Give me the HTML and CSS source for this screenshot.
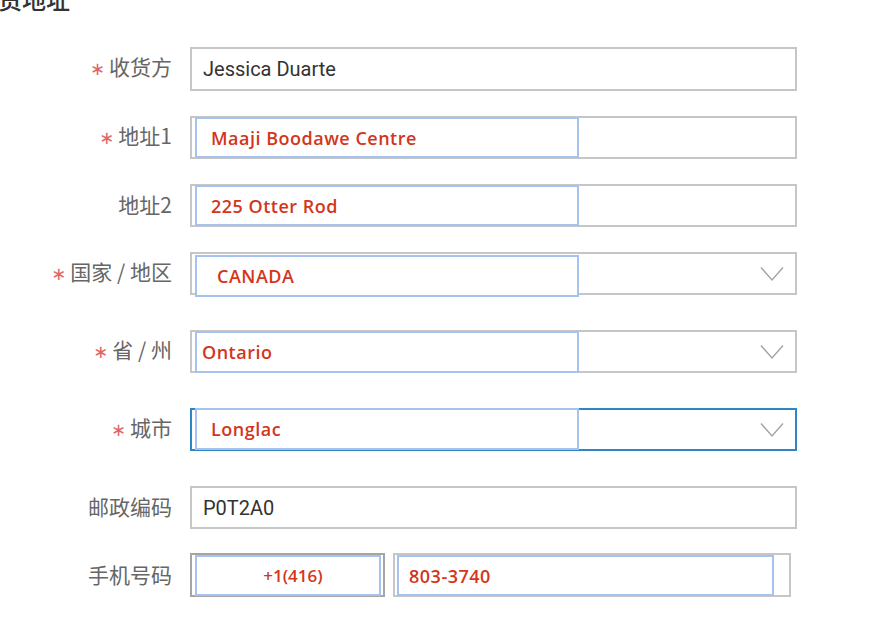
FILE: index.html
```html
<!DOCTYPE html>
<html lang="zh">
<head>
<meta charset="utf-8">
<title>收货地址</title>
<link rel="stylesheet" href="styles.css">
</head>
<body>
<h2 class="title">收货地址</h2>
<form class="form">
  <div class="row first">
    <label class="lbl"><span class="req">∗</span>收货方</label>
    <div class="field"><span class="val">Jessica Duarte</span></div>
  </div>
  <div class="row">
    <label class="lbl"><span class="req">∗</span>地址1</label>
    <div class="field auto"><div class="hl hl-a"><span class="red">Maaji Boodawe Centre</span></div></div>
  </div>
  <div class="row">
    <label class="lbl">地址2</label>
    <div class="field auto"><div class="hl hl-a"><span class="red">225 Otter Rod</span></div></div>
  </div>
  <div class="row">
    <label class="lbl"><span class="req">∗</span>国家 / 地区</label>
    <div class="field auto select"><div class="hl hl-country"><span class="red">CANADA</span></div>
      <svg class="chev" width="24" height="16" viewBox="0 0 24 16"><path d="M1 1.5 L12 14 L23 1.5" fill="none" stroke="#a3a3a3" stroke-width="1.4"/></svg></div>
  </div>
  <div class="row sep">
    <label class="lbl"><span class="req">∗</span>省 / 州</label>
    <div class="field auto select"><div class="hl hl-state"><span class="red">Ontario</span></div>
      <svg class="chev" width="24" height="16" viewBox="0 0 24 16"><path d="M1 1.5 L12 14 L23 1.5" fill="none" stroke="#a3a3a3" stroke-width="1.4"/></svg></div>
  </div>
  <div class="row sep">
    <label class="lbl"><span class="req">∗</span>城市</label>
    <div class="field auto select focus"><div class="hl hl-city"><span class="red">Longlac</span></div>
      <svg class="chev" width="24" height="16" viewBox="0 0 24 16"><path d="M1 1.5 L12 14 L23 1.5" fill="none" stroke="#a3a3a3" stroke-width="1.4"/></svg></div>
  </div>
  <div class="row sep">
    <label class="lbl">邮政编码</label>
    <div class="field"><span class="val">P0T2A0</span></div>
  </div>
  <div class="row phone-row">
    <label class="lbl">手机号码</label>
    <div class="phone">
      <div class="field code"><div class="hl hl-code"><span class="red code-txt">+1(416)</span></div></div>
      <div class="field num"><div class="hl hl-num"><span class="red">803-3740</span></div></div>
    </div>
  </div>
</form>
</body>
</html>
```

FILE: styles.css
```css
* { box-sizing: border-box; }
html, body { margin: 0; padding: 0; background: #fff; }
body {
  font-family: "Noto Sans CJK SC", "Noto Sans", sans-serif;
  overflow: hidden;
  width: 883px;
  height: 637px;
}
.title {
  margin: -13px 0 0 -26px;
  font-size: 24px;
  line-height: 24px;
  font-weight: 500;
  color: #333;
}
.form { display: block; }
.row {
  display: grid;
  grid-template-columns: 172px 607px;
  column-gap: 18px;
  align-items: center;
  margin-top: 25px;
}
.row.first { margin-top: 36px; }
.row.sep { margin-top: 35px; }
.row.phone-row { margin-top: 24px; }
.lbl {
  text-align: right;
  font-size: 21px;
  line-height: 26px;
  padding-bottom: 3px;
  color: #666;
  white-space: nowrap;
}
.req {
  color: #e06666;
  font-size: 18px;
  margin-right: 4px;
  font-family: "DejaVu Sans", sans-serif;
}
.field {
  height: 43px;
  border: 2px solid #c6c6c6;
  background: #fff;
  display: flex;
  align-items: center;
}
.row.first .field { height: 44px; }
.val {
  padding-left: 11px;
  font-family: Roboto, "Noto Sans", sans-serif;
  font-size: 20px;
  color: #333;
}
.hl {
  border: 2px solid #a6c3ef;
  background: #fff;
  display: flex;
  align-items: center;
  align-self: flex-start;
  margin-left: 3px;
  width: 384px;
  height: 41px;
  flex-shrink: 0;
}
.hl-a { margin-top: -1px; padding-left: 14px; }
.hl-country { margin-top: 1px; height: 42px; padding-left: 20px; }
.hl-state { margin-top: -1px; height: 42px; padding-left: 5px; }
.hl-city { margin-top: -2px; height: 42px; padding-left: 14px; }
.red {
  font-family: "Open Sans", "Noto Sans", sans-serif;
  font-weight: 600;
  font-size: 18px;
  letter-spacing: 0.5px;
  color: #d3361b;
  white-space: nowrap;
}
.chev { margin-left: auto; margin-right: 11px; }
.field.focus { border-color: #2f86c4; }
.phone {
  display: flex;
  gap: 8px;
}
.field.code {
  width: 195px;
  height: 44px;
  border-color: #a5a5a5;
}
.field.num {
  width: 398px;
  height: 44px;
  border-color: #c6c6c6;
}
.hl-code {
  width: 186px;
  height: 41px;
  margin-left: 3px;
  margin-top: 0;
  justify-content: center;
  padding-left: 10px;
}
.code-txt { letter-spacing: 0; font-size: 17px; }
.hl-num {
  width: 377px;
  height: 41px;
  margin-left: 2px;
  margin-top: 0;
  padding-left: 10px;
}
```
